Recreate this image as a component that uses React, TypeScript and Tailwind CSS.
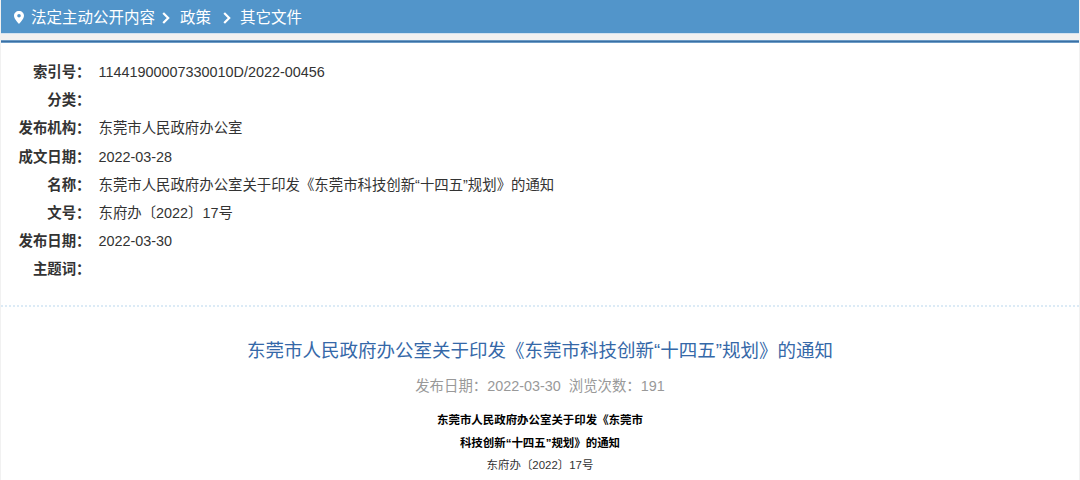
interface InfoRow {
  label: string;
  value: string;
}

const crumbs = ["法定主动公开内容", "政策", "其它文件"];

const rows: InfoRow[] = [
  { label: "索引号", value: "11441900007330010D/2022-00456" },
  { label: "分类", value: "" },
  { label: "发布机构", value: "东莞市人民政府办公室" },
  { label: "成文日期", value: "2022-03-28" },
  { label: "名称", value: "东莞市人民政府办公室关于印发《东莞市科技创新“十四五”规划》的通知" },
  { label: "文号", value: "东府办〔2022〕17号" },
  { label: "发布日期", value: "2022-03-30" },
  { label: "主题词", value: "" },
];

function Pin() {
  return (
    <svg className="w-[10px] h-[13px] ml-px mr-[7px] shrink-0" viewBox="0 0 10 13" fill="white">
      <path
        fillRule="evenodd"
        d="M5 0 C2.1 0 0 2.1 0 4.8 C0 8 5 13 5 13 C5 13 10 8 10 4.8 C10 2.1 7.9 0 5 0 Z M5 3 A1.8 1.8 0 1 1 5 6.6 A1.8 1.8 0 1 1 5 3 Z"
      />
    </svg>
  );
}

function Chevron() {
  return (
    <svg className="w-2 h-3 shrink-0" viewBox="0 0 8 12" fill="none" stroke="white" strokeWidth="2.2">
      <path d="M1.2 1 L6.2 6 L1.2 11" />
    </svg>
  );
}

export default function App() {
  return (
    <div className="w-[1080px] h-[480px] overflow-hidden bg-[#f1f1f1] font-['Liberation_Sans','Noto_Sans_CJK_SC',sans-serif] whitespace-nowrap">
      {/* Breadcrumb */}
      <nav className="mx-px h-[33px] pl-3 pt-0.5 flex items-center bg-[#5295ca] text-white text-[15.5px]">
        <Pin />
        <span>{crumbs[0]}</span>
        <span className="ml-[7px] mr-2.5"><Chevron /></span>
        <span>{crumbs[1]}</span>
        <span className="ml-3 mr-[9px]"><Chevron /></span>
        <span>{crumbs[2]}</span>
      </nav>
      <div className="mx-px h-px bg-[#d3e2f0]" />

      <main className="mx-px mt-1.5 h-[440px] bg-white">
        <div className="h-[3px] bg-[#3a70a4] border-y border-[#6c9bc6]" />

        {/* Document info */}
        <dl className="pt-4 h-[264px] border-b-2 border-dotted border-[#dcebf6] text-[14.4px] text-[#333]">
          {rows.map((row) => (
            <div key={row.label} className="flex h-[28.1px] items-center">
              <dt className="w-[89.5px] text-right font-bold">{row.label}：</dt>
              <dd className="ml-2">{row.value}</dd>
            </div>
          ))}
        </dl>

        {/* Article */}
        <article className="text-center">
          <h1 className="pt-[30px] text-[18.5px] leading-7 text-[#3568a8]">
            东莞市人民政府办公室关于印发《东莞市科技创新“十四五”规划》的通知
          </h1>
          <p className="mt-[11px] text-[14.4px] leading-5 text-[#999]">
            发布日期：2022-03-30<span className="ml-2">浏览次数：191</span>
          </p>
          <div className="mt-[13px] text-[11.45px] leading-[22.7px] text-black">
            <p className="font-bold">东莞市人民政府办公室关于印发《东莞市</p>
            <p className="font-bold">科技创新“十四五”规划》的通知</p>
            <p className="text-[#333]">东府办〔2022〕17号</p>
          </div>
        </article>
      </main>
    </div>
  );
}
